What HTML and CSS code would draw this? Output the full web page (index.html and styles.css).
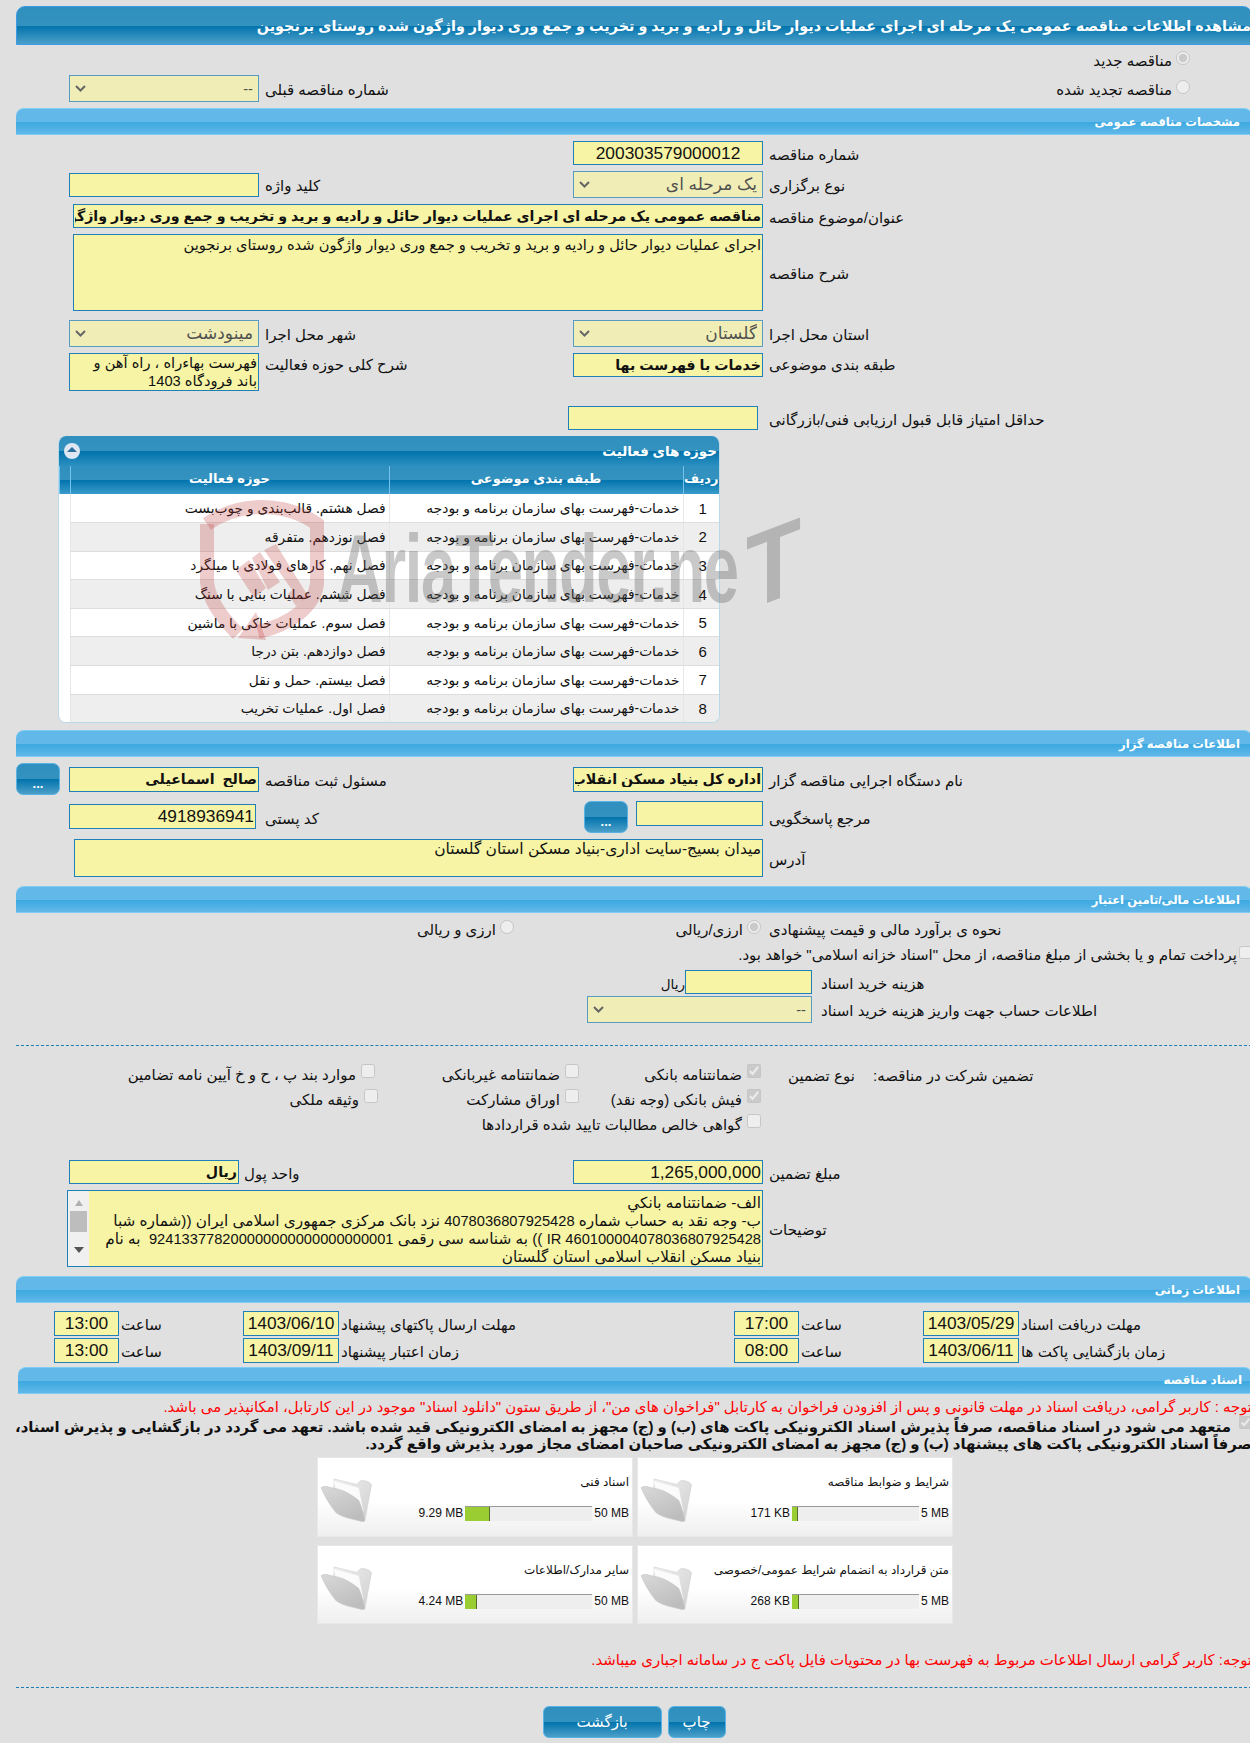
FILE: index.html
```html
<!DOCTYPE html>
<html lang="fa" dir="rtl">
<head>
<meta charset="utf-8">
<title>مشاهده اطلاعات مناقصه</title>
<link rel="stylesheet" href="styles.css">
</head>
<body>
<div class="wrap">
<div class="page">
  <h1 class="title-bar">مشاهده اطلاعات مناقصه عمومی یک مرحله ای اجرای عملیات دیوار حائل و رادیه و برید و تخریب و جمع وری دیوار واژگون شده روستای برنجوین</h1>

  <div class="form renew">
    <div class="lbl opt span-all"><input type="radio" name="t" checked disabled>مناقصه جدید</div>
    <div class="lbl opt"><input type="radio" name="t" disabled>مناقصه تجدید شده</div>
    <div></div>
    <div class="lbl">شماره مناقصه قبلی</div>
    <select disabled><option>--</option></select>
  </div>

  <h2 class="sec">مشخصات مناقصه عمومی</h2>
  <div class="form">
    <div class="lbl">شماره مناقصه</div>
    <input class="big center" readonly value="200303579000012">
    <div></div><div></div><div></div>

    <div class="lbl">نوع برگزاری</div>
    <select class="big" disabled><option>یک مرحله ای</option></select>
    <div class="lbl">کلید واژه</div>
    <input readonly value="">
    <div></div>

    <div class="lbl">عنوان/موضوع مناقصه</div>
    <input class="wide bold" readonly value="مناقصه عمومی یک مرحله ای اجرای عملیات دیوار حائل و رادیه و برید و تخریب و جمع وری دیوار واژگون شده روستای برنجوین">
    <div></div>

    <div class="lbl">شرح مناقصه</div>
    <textarea class="wide desc" readonly>اجرای عملیات دیوار حائل و رادیه و برید و تخریب و جمع وری دیوار واژگون شده روستای برنجوین</textarea>
    <div></div>

    <div class="lbl gap-top">استان محل اجرا</div>
    <select class="big gap-top" disabled><option>گلستان</option></select>
    <div class="lbl gap-top">شهر محل اجرا</div>
    <select class="big gap-top" disabled><option>مینودشت</option></select>
    <div></div>

    <div class="lbl top">طبقه بندی موضوعی</div>
    <input class="bold top-ctl" readonly value="خدمات با فهرست بها">
    <div class="lbl top">شرح کلی حوزه فعالیت</div>
    <textarea class="activity" readonly>فهرست بهاءراه ، راه آهن و
باند فرودگاه 1403</textarea>
    <div></div>

    <div class="lbl gap-min">حداقل امتیاز قابل قبول ارزیابی فنی/بازرگانی</div>
    <input class="shift-min gap-min" readonly value="">
    <div></div><div></div><div></div>
  </div>

  <section class="panel">
    <header class="panel-head">
      <span>حوزه های فعالیت</span>
      <i class="toggle"><b></b></i>
    </header>
    <table class="grid">
      <thead>
        <tr><th class="c-n">ردیف</th><th class="c-s">طبقه بندی موضوعی</th><th class="c-a">حوزه فعالیت</th><th class="c-g"></th></tr>
      </thead>
      <tbody>
        <tr><td class="n">1</td><td>خدمات-فهرست بهای سازمان برنامه و بودجه</td><td>فصل هشتم. قالب‌بندی و چوب‌بست</td><td class="g"></td></tr>
        <tr><td class="n">2</td><td>خدمات-فهرست بهای سازمان برنامه و بودجه</td><td>فصل نوزدهم. متفرقه</td><td class="g"></td></tr>
        <tr><td class="n">3</td><td>خدمات-فهرست بهای سازمان برنامه و بودجه</td><td>فصل نهم. کارهای فولادی با میلگرد</td><td class="g"></td></tr>
        <tr><td class="n">4</td><td>خدمات-فهرست بهای سازمان برنامه و بودجه</td><td>فصل ششم. عملیات بنایی با سنگ</td><td class="g"></td></tr>
        <tr><td class="n">5</td><td>خدمات-فهرست بهای سازمان برنامه و بودجه</td><td>فصل سوم. عملیات خاکی با ماشین</td><td class="g"></td></tr>
        <tr><td class="n">6</td><td>خدمات-فهرست بهای سازمان برنامه و بودجه</td><td>فصل دوازدهم. بتن درجا</td><td class="g"></td></tr>
        <tr><td class="n">7</td><td>خدمات-فهرست بهای سازمان برنامه و بودجه</td><td>فصل بیستم. حمل و نقل</td><td class="g"></td></tr>
        <tr><td class="n">8</td><td>خدمات-فهرست بهای سازمان برنامه و بودجه</td><td>فصل اول. عملیات تخریب</td><td class="g"></td></tr>
      </tbody>
    </table>
  </section>

  <h2 class="sec sec-org">اطلاعات مناقصه گزار</h2>
  <div class="form form-org">
    <div class="lbl">نام دستگاه اجرایی مناقصه گزار</div>
    <input class="bold" readonly value="اداره کل بنیاد مسکن انقلاب">
    <div class="lbl">مسئول ثبت مناقصه</div>
    <input class="bold" readonly value="صالح  اسماعیلی">
    <button class="more" type="button">...</button>

    <div class="lbl top-ref">مرجع پاسخگویی</div>
    <div class="ref"><input readonly value=""><button class="more" type="button">...</button></div>
    <div class="lbl top-ref">کد پستی</div>
    <input class="big postal" readonly value="4918936941">
    <div></div>

    <div class="lbl">آدرس</div>
    <textarea class="addr" readonly>میدان بسیج-سایت اداری-بنیاد مسکن استان گلستان</textarea>
    <div></div>
  </div>

  <h2 class="sec sec-fin">اطلاعات مالی/تامین اعتبار</h2>
  <div class="form est">
    <div class="lbl">نحوه ی برآورد مالی و قیمت پیشنهادی</div>
    <div class="opt"><input type="radio" name="e" checked disabled>ارزی/ریالی</div>
    <div class="opt opt2"><input type="radio" name="e" disabled>ارزی و ریالی</div>
    <div></div><div></div>
  </div>
  <div class="pay"><input type="checkbox" disabled>پرداخت تمام و یا بخشی از مبلغ مناقصه، از محل "اسناد خزانه اسلامی" خواهد بود.</div>
  <div class="cost-row">
    <div class="lbl cost-l">هزینه خرید اسناد</div>
    <input class="cost" readonly value="">
    <span class="unit">ریال</span>
  </div>
  <div class="cost-row acc">
    <div class="lbl cost-l">اطلاعات حساب جهت واریز هزینه خرید اسناد</div>
    <select class="acc-s" disabled><option>--</option></select>
  </div>

  <hr class="sep sep-1">

  <div class="guar">
    <div class="lbl">تضمین شرکت در مناقصه:</div>
    <div class="lbl">نوع تضمین</div>
    <div class="chk c1"><input type="checkbox" checked disabled>ضمانتنامه بانکی</div>
    <div class="chk"><input type="checkbox" disabled>ضمانتنامه غیربانکی</div>
    <div class="chk"><input type="checkbox" disabled>موارد بند پ ، ح و خ آیین نامه تضامین</div>

    <div></div><div></div>
    <div class="chk c1"><input type="checkbox" checked disabled>فیش بانکی (وجه نقد)</div>
    <div class="chk"><input type="checkbox" disabled>اوراق مشارکت</div>
    <div class="chk nudge"><input type="checkbox" disabled>وثیقه ملکی</div>

    <div></div><div></div>
    <div class="chk c1 span3"><input type="checkbox" disabled>گواهی خالص مطالبات تایید شده قراردادها</div>
  </div>

  <div class="form amount">
    <div class="lbl">مبلغ تضمین</div>
    <input class="big" readonly value="1,265,000,000">
    <div class="cur span2"><span class="lbl">واحد پول</span><input class="bold" readonly value="ریال"></div>
    <div></div>

    <div class="lbl">توضیحات</div>
    <div class="notes">
      <div class="notes-text">الف- ضمانتنامه بانکي
ب- وجه نقد به حساب شماره <span class="num">4078036807925428</span> نزد بانک مرکزی جمهوری اسلامی ایران ((شماره شبا
<span class="num">IR 460100004078036807925428</span> )) به شناسه سی رقمی <span class="num">924133778200000000000000000001</span>  به نام
بنیاد مسکن انقلاب اسلامی استان گلستان</div>
      <div class="sb"><i class="up"></i><i class="thumb"></i><i class="down"></i></div>
    </div>
    <div></div>
  </div>

  <h2 class="sec sec-time">اطلاعات زمانی</h2>
  <div class="times">
    <div class="lbl">مهلت دریافت اسناد</div><input class="big center" readonly value="1403/05/29">
    <div class="lbl">ساعت</div><input class="big center" readonly value="17:00">
    <div class="lbl">مهلت ارسال پاکتهای پیشنهاد</div><input class="big center" readonly value="1403/06/10">
    <div class="lbl">ساعت</div><input class="big center" readonly value="13:00">
    <div></div>
    <div class="lbl">زمان بازگشایی پاکت ها</div><input class="big center" readonly value="1403/06/11">
    <div class="lbl">ساعت</div><input class="big center" readonly value="08:00">
    <div class="lbl">زمان اعتبار پیشنهاد</div><input class="big center" readonly value="1403/09/11">
    <div class="lbl">ساعت</div><input class="big center" readonly value="13:00">
    <div></div>
  </div>

  <h2 class="sec sec-docs">اسناد مناقصه</h2>
  <p class="red note-1">توجه : کاربر گرامی، دریافت اسناد در مهلت قانونی و پس از افزودن فراخوان به کارتابل "فراخوان های من"، از طریق ستون "دانلود اسناد" موجود در این کارتابل، امکانپذیر می باشد.</p>
  <p class="commit"><input type="checkbox" checked disabled>متعهد می شود در اسناد مناقصه، صرفاً پذیرش اسناد الکترونیکی پاکت های (ب) و (ج) مجهز به امضای الکترونیکی قید شده باشد. تعهد می گردد در بازگشایی و پذیرش اسناد،<br>صرفاً اسناد الکترونیکی پاکت های پیشنهاد (ب) و (ج) مجهز به امضای الکترونیکی صاحبان امضای مجاز مورد پذیرش واقع گردد.</p>

  <div class="cards">
    <article class="card">
      <div class="card-body">
        <div class="card-title">شرایط و ضوابط مناقصه</div>
        <div class="meter"><span>5 MB</span><div class="bar"><i style="width:6px"></i></div><span>171 KB</span></div>
      </div>
      <svg class="folder" viewBox="0 0 160 140"><use href="#folder-icon"/></svg>
    </article>
    <article class="card">
      <div class="card-body">
        <div class="card-title">اسناد فنی</div>
        <div class="meter"><span>50 MB</span><div class="bar"><i style="width:25px"></i></div><span>9.29 MB</span></div>
      </div>
      <svg class="folder" viewBox="0 0 160 140"><use href="#folder-icon"/></svg>
    </article>
    <article class="card">
      <div class="card-body">
        <div class="card-title">متن قرارداد به انضمام شرایط عمومی/خصوصی</div>
        <div class="meter"><span>5 MB</span><div class="bar"><i style="width:7px"></i></div><span>268 KB</span></div>
      </div>
      <svg class="folder" viewBox="0 0 160 140"><use href="#folder-icon"/></svg>
    </article>
    <article class="card">
      <div class="card-body">
        <div class="card-title">سایر مدارک/اطلاعات</div>
        <div class="meter"><span>50 MB</span><div class="bar"><i style="width:12px"></i></div><span>4.24 MB</span></div>
      </div>
      <svg class="folder" viewBox="0 0 160 140"><use href="#folder-icon"/></svg>
    </article>
  </div>

  <p class="red note-2">توجه: کاربر گرامی ارسال اطلاعات مربوط به فهرست بها در محتویات فایل پاکت ج در سامانه اجباری میباشد.</p>
  <hr class="sep sep-2">
  <div class="actions">
    <button class="act act-print" type="button">چاپ</button>
    <button class="act act-back" type="button">بازگشت</button>
  </div>
</div>

<div class="wm" aria-hidden="true">
  <svg class="wm-shield" viewBox="0 0 124 140">
    <path class="wm-s" d="M7 24C24 12 44 7 62 7C80 7 100 12 117 24V84C114 106 92 124 58 132"/>
    <path class="wm-s" d="M7 24V82C9 100 22 118 38 134"/>
    <polygon class="wm-f" points="38,138 66,140 56,112"/>
    <polygon class="wm-f" points="36,70 49,60 66,88 54,98"/>
    <polygon class="wm-f" points="52,58 60,52 80,82 68,90"/>
    <polygon class="wm-f" points="64,50 76,44 108,96 96,106 88,94 92,90"/>
  </svg>
  <span class="wm-text">AriaTender.ne</span>
  <span class="wm-t">T</span>
</div>
</div>

<svg class="defs" width="0" height="0" aria-hidden="true">
  <defs>
    <linearGradient id="fg-front" x1="0" y1="0" x2="0.6" y2="1">
      <stop offset="0" stop-color="#d9d9d9"/><stop offset="1" stop-color="#bdbdbd"/>
    </linearGradient>
    <linearGradient id="fg-back" x1="0" y1="0" x2="1" y2="1">
      <stop offset="0" stop-color="#f0f0f0"/><stop offset="1" stop-color="#cfcfcf"/>
    </linearGradient>
    <g id="folder-icon">
      <path d="M44 12L112 28L122 18C132 14 150 20 156 28L136 136L44 60Z" fill="url(#fg-back)" stroke="#d2d2d2" stroke-width="2"/>
      <path d="M42 18L118 38L132 110L60 70Z" fill="#fbfbfb"/>
      <path d="M6 38C12 32 24 34 36 38C60 42 84 48 118 76C126 92 132 116 136 136C134 140 126 138 118 136C92 130 70 126 50 112C32 90 16 62 6 38Z" fill="url(#fg-front)" stroke="#c4c4c4" stroke-width="2"/>
    </g>
  </defs>
</svg>
</body>
</html>
```

FILE: styles.css
```css
* { box-sizing: border-box; }
html, body { margin: 0; padding: 0; background: #fff; }
body {
  font-family: "Liberation Sans", "DejaVu Sans", sans-serif;
  font-size: 15px;
  color: #111;
  overflow-x: hidden;
}
.wrap {
  position: relative;
  height: 1743px;
  padding-top: 6px;
  background: #e0e0e0;
  overflow: hidden;
}
.page { width: 1236px; margin-right: -2px; }

/* bars */
.title-bar {
  margin: 0;
  height: 39px;
  line-height: 39px;
  padding-right: 0;
  white-space: nowrap;
  overflow: hidden;
  font-size: 14.4px;
  font-weight: bold;
  color: #fff;
  border: 1px solid #3a9be6;
  border-radius: 9px 9px 0 0;
  background: linear-gradient(#2f8fbe 0, #3492bf 50%, #0273ac 51%, #4b9fc9 100%);
}
.sec {
  margin: 6px 0 0;
  height: 27px;
  line-height: 25px;
  padding-right: 12px;
  font-size: 11.6px;
  font-weight: bold;
  color: #fff;
  border-top: 1px solid #7fcdf4;
  border-bottom: 1px solid #7fcdf4;
  border-radius: 8px 8px 0 0;
  background: linear-gradient(#62b9e9 0, #62b9e9 50%, #3aa8e0 51%, #62b8e8 100%);
}
.sec-org { margin-top: 7px; }
.sec-fin { margin-top: 9px; }
.sec-time { margin-top: 9px; }
.sec-docs { margin: 4px 0 0 2px; padding-right: 10px; font-size: 12px; }

/* form grid */
.form {
  display: grid;
  grid-template-columns: 489px 190px 314px 190px 53px;
  row-gap: 6px;
  padding-top: 6px;
  align-items: center;
}
.lbl { text-align: left; padding-left: 6px; line-height: 16px; padding-top: 3px; }
.top { align-self: start; padding-top: 4px; }
.top-ctl { align-self: start; }
.gap-top { margin-top: 3px; }
.gap-min { margin-top: 9px; }
.shift-min { position: relative; left: -5px; }
.wide { grid-column: 2 / 5; margin-left: 4px; width: calc(100% - 4px); }

:where(input:not([type]), select, textarea) {
  display: block;
  width: 100%;
  height: 24px;
  margin: 0;
  padding: 0 1px;
  font: 14.67px "Liberation Sans", "DejaVu Sans", sans-serif;
  color: #111;
  background: #f7f5a5;
  border: 1px solid #1f80b8;
  border-radius: 0;
  outline: 0;
}
select {
  height: 27px;
  padding-right: 5px;
  appearance: none;
  background-image: url("data:image/svg+xml,%3Csvg xmlns='http://www.w3.org/2000/svg' viewBox='0 0 11 7'%3E%3Cpath d='M1 1l4.5 4.5L10 1' fill='none' stroke='%23333' stroke-width='2'/%3E%3C/svg%3E");
  background-repeat: no-repeat;
  background-position: left 5px center;
  background-size: 11px 7px;
}
select:disabled { color: #111; opacity: .7; }
textarea { resize: none; overflow: hidden; line-height: 16px; padding: 1px; }
.big { font-size: 17.33px; }
select.big { font-size: 17px; }
.bold { font-weight: bold; font-size: 14.2px; }
.center { text-align: center; }
.desc { height: 77px; font-size: 14.67px; padding-top: 2px; }
.activity { height: 38px; font-size: 14.67px; line-height: 18px; padding-top: 0; }
.renew { row-gap: 2px; padding-top: 0; align-items: center; }
.renew > .span-all { grid-column: 1 / -1; height: 28px; padding-top: 8px; }
.renew > .opt { padding-top: 3px; }
.opt { text-align: right; padding: 0 62px 0 0; display: flex; align-items: center; }
.opt input { width: 14px; height: 14px; margin: -6px 0 0 4px; flex: none; }

/* panel */
.panel {
  width: 662px;
  height: 287px;
  margin: 6px 532px 0 0;
  background: #fff;
  border: 1px solid #b9d8ea;
  border-top: 0;
  border-radius: 8px;
  overflow: hidden;
}
.panel-head {
  display: flex;
  justify-content: space-between;
  align-items: center;
  height: 30px;
  padding: 0 2px 0 5px;
  color: #fff;
  font-weight: bold;
  font-size: 13.5px;
  background: linear-gradient(#2f8fbe 0, #3492bf 50%, #0273ac 51%, #2b8fc0 100%);
}
.toggle {
  display: block;
  width: 16px;
  height: 16px;
  margin-left: 0;
  border-radius: 50%;
  background: #dfe8f2;
  position: relative;
}
.toggle b {
  position: absolute;
  left: 3px;
  top: 4px;
  border: 5px solid transparent;
  border-top: 0;
  border-bottom: 5px solid #2c6d9b;
}
.grid { width: 100%; border-collapse: collapse; table-layout: fixed; }
.grid th {
  height: 28px;
  padding: 0 0 4px;
  color: #fff;
  font-size: 13px;
  font-weight: bold;
  text-align: center;
  border-left: 1px solid #74c3ee;
  background: linear-gradient(#2f8fbe 0, #3492bf 50%, #0273ac 51%, #3a9bca 100%);
}
.grid .c-n { width: 36px; }
.grid .c-s { width: 294px; }
.grid .c-a { width: 319px; }
.grid td {
  height: 28.6px;
  padding: 0 3px 0 0;
  font-size: 13.8px;
  text-align: right;
  border-left: 1px solid #e6e6e6;
  border-bottom: 1px solid #ddd;
}
.grid tbody tr:nth-child(even) td { background: #eee; }
.grid tbody tr:nth-child(even) td.g { background: #fff; }
.grid td.g { border: 0; }
.grid td.n { text-align: center; padding: 0 0 0 3px; font-size: 15px; }

/* organiser */
.form-org { padding-top: 6px; }
.form-org > .bold { height: 25px; }
.more {
  width: 44px;
  height: 32px;
  padding: 8px 0 0;
  color: #fff;
  font: bold 13px "Liberation Sans", sans-serif;
  border: 1px solid #58b3e4;
  border-radius: 7px;
  background: linear-gradient(#2f8fbe 0, #3492bf 50%, #0273ac 51%, #4b9fc9 100%);
}
.form-org > .more { justify-self: end; }
.ref { display: flex; gap: 8px; height: 32px; align-self: start; }
.ref input { width: 127px; height: 25px; flex: none; }
.ref .more { flex: none; }
.top-ref { align-self: start; padding-top: 10px; }
.postal { align-self: start; margin-top: 3px; width: 187px; justify-self: end; text-align: right; height: 25px; }
.addr { grid-column: 2 / 5; margin-left: 5px; width: calc(100% - 5px); height: 38px; font-size: 15.5px; }

/* financial */
.est { padding-top: 8px; }
.est .lbl { padding-top: 0; }
.est .opt { padding: 0 2px 0 0; }
.est .opt2 { padding-right: 59px; }
.pay { margin-top: 7px; height: 18px; line-height: 18px; display: flex; align-items: center; white-space: nowrap; }
.pay input { width: 13px; height: 13px; margin: -6px 0 0 2px; flex: none; }
.cost-row { display: flex; align-items: center; margin-top: 6px; height: 24px; }
.acc { margin-top: 2px; height: 27px; }
.cost-l { width: 440px; padding-left: 9px; flex: none; }
.cost { width: 127px; flex: none; }
.unit { padding-top: 4px; font-size: 13.5px; }
.acc-s { width: 225px; flex: none; }

.sep { margin: 0; height: 0; border: 0; border-top: 1px dashed #1f7fb5; }
.sep-1 { margin-top: 22px; }
.sep-2 { margin-top: 18px; }

/* guarantee */
.guar {
  display: grid;
  grid-template-columns: 379px 85px 209px 204px 359px;
  grid-auto-rows: 25px;
  margin-top: 16px;
  align-items: center;
}
.guar .lbl { padding-left: 0; padding-top: 3px; }
.chk { display: flex; align-items: center; }
.chk input { width: 14px; height: 14px; margin: -8px 0 0 5px; flex: none; }
.c1 { padding-right: 27px; }
.nudge { margin-right: -3px; }
.span3 { grid-column: 3 / 6; }

.amount { padding-top: 23px; }
.amount > .big { height: 24px; }
.span2 { grid-column: 3 / 5; }
.cur { display: flex; justify-content: flex-end; align-items: center; gap: 0; }
.cur input { width: 170px; height: 24px; flex: none; }
.cur .lbl { padding-left: 5px; }
.notes {
  grid-column: 2 / 5;
  display: flex;
  height: 77px;
  margin-left: -2px;
  border: 1px solid #1f80b8;
  background: #f7f5a5;
  overflow: hidden;
}
.notes-text {
  flex: 1;
  min-width: 0;
  padding: 3px 1px 0 0;
  font-size: 15.3px;
  line-height: 18px;
  white-space: pre;
  overflow: hidden;
  text-align: right;
}
.num { font-size: 14.67px; }
.sb {
  flex: none;
  width: 21px;
  display: flex;
  flex-direction: column;
  align-items: center;
  background: #f0f0f0;
}
.sb i { display: block; }
.up { margin-top: 9px; border: 4px solid transparent; border-top: 0; border-bottom: 6px solid #b0b0b0; }
.thumb { width: 17px; height: 21px; margin-top: 5px; background: #bdbdbd; }
.down { margin-top: 15px; border: 5px solid transparent; border-bottom: 0; border-top: 6px solid #555; }

/* times */
.times {
  display: grid;
  grid-template-columns: 233px 96px 124px 65px 395px 96px 124px 65px 38px;
  padding-top: 8px;
  row-gap: 2px;
  align-items: center;
}
.times input { height: 25px; }
.times .lbl { padding-left: 2px; }

/* docs */
.red { margin: 0; color: #f00; white-space: nowrap; line-height: 18px; font-size: 14.9px; }
.note-1 { margin-top: 4px; height: 18px; }
.commit {
  margin: 0;
  font-weight: bold;
  font-size: 14.9px;
  line-height: 17px;
  white-space: nowrap;
}
.commit input { width: 13px; height: 13px; margin: 0 0 0 8px; vertical-align: 3px; }
.cards {
  display: grid;
  grid-template-columns: 316px 316px;
  gap: 8px 4px;
  width: 636px;
  margin: 4px 299px 0 0;
}
.card {
  display: flex;
  height: 80px;
  padding: 0 3px 0 1px;
  border: 1px solid #e8e8e8;
  background: linear-gradient(#fff 0, #fff 55%, #efefef 100%);
}
.card:nth-child(n+3) { height: 79px; }
.card-body { flex: 1; min-width: 0; }
.card-title { height: 17px; margin-top: 16px; line-height: 17px; font-size: 12px; white-space: nowrap; }
.meter { display: flex; align-items: center; gap: 2px; margin-top: 14px; height: 16px; padding-right: 0; font-size: 12px; }
.meter span { direction: ltr; white-space: nowrap; }
.bar { width: 127px; height: 15px; flex: none; direction: ltr; background: #eee; border-top: 1px solid #999; }
.bar i { display: block; height: 14px; background: #9acd32; border-right: 1px solid #556b2f; }
.folder { flex: none; width: 54px; height: 47px; margin-top: 17px; }
.defs { position: absolute; }

.note-2 { margin-top: 27px; height: 18px; }
.actions { display: flex; justify-content: center; gap: 6px; margin-top: 18px; }
.act {
  height: 32px;
  padding: 0;
  color: #fff;
  font: 15px "Liberation Sans", "DejaVu Sans", sans-serif;
  border: 1px solid #58b3e4;
  border-radius: 6px;
  background: linear-gradient(#2f8fbe 0, #3492bf 50%, #0273ac 51%, #4b9fc9 100%);
}
.act-print { width: 58px; }
.act-back { width: 119px; }

/* watermark */
.wm { position: absolute; left: 200px; top: 500px; width: 610px; height: 140px; pointer-events: none; direction: ltr; }
.wm-shield { position: absolute; left: 0; top: 0; width: 124px; height: 140px; }
.wm-s { fill: none; stroke: rgba(190, 50, 50, .25); stroke-width: 14; }
.wm-f { fill: rgba(190, 50, 50, .25); }
.wm-text {
  position: absolute;
  left: 137px;
  top: 14px;
  font: bold 96px/110px "Liberation Sans", sans-serif;
  letter-spacing: -2px;
  color: rgba(90, 90, 90, .33);
  transform: scaleX(.66);
  transform-origin: left top;
  white-space: nowrap;
}
.wm-t {
  position: absolute;
  left: 546px;
  top: 14px;
  font: bold 106px/120px "Liberation Sans", sans-serif;
  color: rgba(90, 90, 90, .33);
  transform: scaleX(.85) skewY(-18deg);
  transform-origin: left bottom;
}
```
